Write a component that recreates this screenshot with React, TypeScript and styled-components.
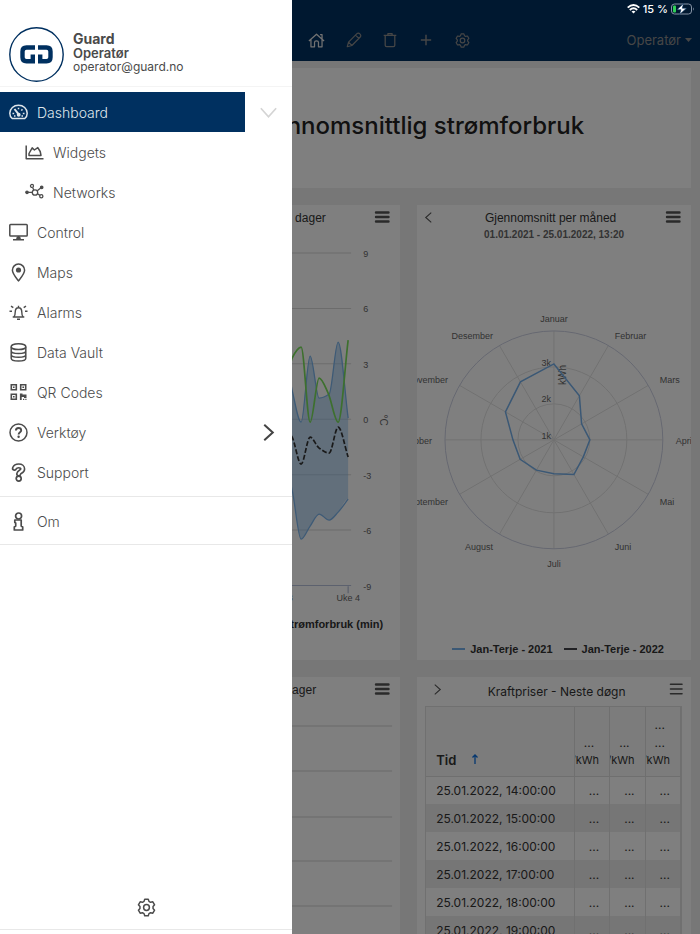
import React from "react";
import styled, { createGlobalStyle, css } from "styled-components";

const UI = `Inter, "Liberation Sans", sans-serif`;
const CHART = `"Liberation Sans", Arial, sans-serif`;
const NAVY = "#003060";

const GlobalStyle = createGlobalStyle`
  *, *::before, *::after { box-sizing: border-box; }
  body { margin: 0; font-family: ${UI}; color: #333; background: #efefef; }
  button { font: inherit; color: inherit; background: none; border: 0; padding: 0; cursor: pointer; }
  a { color: inherit; text-decoration: none; }
  h1, h2, h3, p, ul { margin: 0; padding: 0; }
  ul { list-style: none; }
  svg { display: block; flex: none; }
`;

const Shell = styled.div`
  position: relative;
  height: 100vh;
  overflow: hidden;
`;

/* ---------- top bar ---------- */

const TopBar = styled.header`
  display: flex;
  align-items: center;
  height: 61px;
  padding: 19px 8px 0 306px;
  background: ${NAVY};
  color: #8c8c8c;
`;

const Tools = styled.nav`
  display: flex;
  align-items: center;
  gap: 20px;
  flex: 1;
`;

const ToolButton = styled.button<{ $active?: boolean }>`
  display: grid;
  place-items: center;
  width: ${(p) => (p.$active ? "20px" : "16px")};
  height: 24px;
  color: ${(p) => (p.$active ? "#e4e4e4" : "#8c8c8c")};
`;

const UserMenu = styled.button`
  display: flex;
  align-items: center;
  gap: 4px;
  font-size: 13px;
`;

const StatusBar = styled.div`
  position: absolute;
  top: 1px;
  right: 5px;
  display: flex;
  align-items: center;
  gap: 3px;
  height: 16px;
  color: #fff;
  font-size: 11px;
  font-weight: 500;
`;

/* ---------- dashboard ---------- */

const Dashboard = styled.main`
  display: grid;
  grid-template-columns: minmax(0, 10fr) minmax(0, 7fr);
  gap: 17px;
  padding: 7px 9px;
`;

const Banner = styled.section`
  grid-column: 1 / -1;
  display: grid;
  place-items: center;
  height: 120px;
  padding-bottom: 6px;
  background: #fff;
  color: #222;
`;

const BannerTitle = styled.h1`
  font-size: 24px;
  font-weight: 500;
  white-space: nowrap;
`;

const Card = styled.section`
  display: flex;
  flex-direction: column;
  height: 455px;
  background: #fff;
  overflow: hidden;
`;

const CardHead = styled.div<{ $wide?: boolean }>`
  display: grid;
  grid-template-columns: 20px 1fr 20px;
  align-items: center;
  height: 24px;
  padding: ${(p) => (p.$wide ? "0 5px 0 10px" : "0 8px 0 1px")};
`;

const CardTitle = styled.h2<{ $ui?: boolean }>`
  padding-top: ${(p) => (p.$ui ? "4px" : "2px")};
  font-family: ${(p) => (p.$ui ? UI : CHART)};
  font-size: 12px;
  font-weight: 400;
  text-align: center;
  color: #333;
  white-space: nowrap;
`;

const Subtitle = styled.p`
  min-height: 16px;
  font-family: ${CHART};
  font-size: 10px;
  font-weight: 700;
  line-height: 12px;
  text-align: center;
  color: #666;
`;

const CardButton = styled.button`
  display: grid;
  place-items: center;
  width: 20px;
  height: 20px;
  color: #555;
`;

const Plot = styled.svg`
  width: 100%;
  height: auto;
  font-family: ${CHART};
  font-size: 9px;
  fill: #666;
`;

const Legend = styled.ul`
  display: flex;
  justify-content: center;
  gap: 11px;
  margin-top: auto;
  padding: 0 0 4px 8px;
  font-family: ${CHART};
  font-size: 11px;
  font-weight: 700;
  line-height: 14px;
  color: #333;
`;

const AreaLegend = styled(Legend)`
  justify-content: flex-end;
  padding: 0 17px 29px 0;
`;

const LegendItem = styled.li`
  display: flex;
  align-items: center;
  gap: 5px;
  white-space: nowrap;
`;

const Swatch = styled.span<{ $color: string }>`
  width: 13px;
  height: 2px;
  background: ${(p) => p.$color};
`;

/* ---------- price table ---------- */

const TableBox = styled.div`
  margin: 5px 9px 0 8px;
  flex: 1;
  overflow: hidden;
  border: 1px solid #e0e0e0;
`;

const PriceTable = styled.table`
  width: 100%;
  table-layout: fixed;
  border-collapse: collapse;
  font-size: 12px;
  color: #333;
`;

const HeadCell = styled.th`
  height: 69px;
  padding: 0 10px 8px 0;
  vertical-align: bottom;
  border-right: 1px solid #dedede;
  border-bottom: 1px solid #dedede;
  background: #f8f8f8;
  font-size: 11px;
  font-weight: 400;
`;

const TimeHead = styled(HeadCell)`
  width: 148px;
  padding: 0 10px 8px;
  text-align: left;
  font-size: 13px;
  font-weight: 600;
`;

const SortButton = styled.button`
  display: flex;
  align-items: center;
  gap: 15px;
`;

const Unit = styled.span`
  display: flex;
  flex-direction: column;
  align-items: flex-end;
  overflow: hidden;
  line-height: 16px;
`;

const Dots = styled.span`
  padding-right: 5px;
  font-size: 12px;
  line-height: 18px;
`;

const BodyRow = styled.tr`
  &:nth-child(even) {
    background: #ececec;
  }
`;

const Cell = styled.td<{ $num?: boolean }>`
  height: 28px;
  padding: 0 10px;
  border-right: 1px solid #e0e0e0;
  text-align: ${(p) => (p.$num ? "right" : "left")};
  white-space: nowrap;
`;

/* ---------- drawer ---------- */

const Scrim = styled.div`
  position: absolute;
  inset: 0;
  background: rgba(0, 0, 0, 0.5);
`;

const Drawer = styled.aside`
  position: absolute;
  inset: 0 auto 0 0;
  display: flex;
  flex-direction: column;
  width: 292px;
  background: #fff;
  color: #4c4c4c;
`;

const Profile = styled.div`
  display: flex;
  align-items: center;
  gap: 9px;
  height: 87px;
  padding: 22px 9px 0;
  border-bottom: 1px solid #f4f4f4;
  color: #4a4a4a;
`;

const ProfileText = styled.div`
  display: flex;
  flex-direction: column;
  padding-bottom: 4px;
`;

const Name = styled.strong`
  font-size: 14px;
  font-weight: 700;
  line-height: 15px;
`;

const Role = styled.strong`
  font-size: 13px;
  font-weight: 600;
  line-height: 14px;
`;

const Email = styled.span`
  font-size: 12px;
  line-height: 13px;
`;

const Menu = styled.ul<{ $second?: boolean }>`
  padding: ${(p) => (p.$second ? "4px 0 3px" : "5px 0 4px")};
  border-bottom: 1px solid #e8e8e8;
`;

const MenuRow = styled.li`
  display: flex;
  align-items: center;
  height: 40px;
`;

const MenuLink = styled.a<{ $active?: boolean; $sub?: boolean }>`
  display: flex;
  align-items: center;
  gap: 9px;
  width: 245px;
  height: 40px;
  padding-left: ${(p) => (p.$sub ? "25px" : "9px")};
  font-size: 14px;
  font-weight: 300;
  ${(p) =>
    p.$active &&
    css`
      background: ${NAVY};
      color: #dfe5eb;
    `}
`;

const Expand = styled.button<{ $faded?: boolean }>`
  display: grid;
  place-items: center;
  flex: 1;
  height: 40px;
  color: ${(p) => (p.$faded ? "#d4d4d4" : "#444")};
`;

const DrawerFoot = styled.div`
  display: grid;
  place-items: center;
  height: 44px;
  margin: auto 0 4px;
  border-bottom: 1px solid #e8e8e8;
`;

/* ---------- icons ---------- */

const IconSvg = styled.svg.attrs({ viewBox: "0 0 19 19", "aria-hidden": true })<{ $size?: number; $weight?: number }>`
  width: ${(p) => p.$size ?? 19}px;
  height: ${(p) => p.$size ?? 19}px;
  fill: none;
  stroke: currentColor;
  stroke-width: ${(p) => p.$weight ?? 1.5};
  stroke-linejoin: round;
`;

const GaugeIcon = () => (
  <IconSvg>
    <path d="M3.200 15.500C1.700 14.300 0.800 12.500 0.800 10.300C0.800 5.600 4.700 2.200 9.500 2.200S18.200 5.600 18.200 10.300C18.200 12.500 17.300 14.300 15.800 15.500Z" />
    <path d="M5.500 6L9.500 11.200" strokeWidth="2" />
    <circle cx="9.700" cy="11.700" r="1.200" fill="currentColor" />
    <path d="M3.500 10.500H5.200M13.800 10.500H15.500M9.500 4.700V6.200M13.400 6.300L12.400 7.600M5 13H6.500M12.500 13H14" />
  </IconSvg>
);

const AreaIcon = () => (
  <IconSvg>
    <path d="M1.200 2.500V15.700H18.500" />
    <path d="M4 12.500V10.500L7.200 4.800L9.400 7L12.800 4.600L15.200 8.500L16 12.500Z" />
  </IconSvg>
);

const NetworkIcon = () => (
  <IconSvg $weight={1.3}>
    <circle cx="2" cy="9.300" r="1.200" fill="currentColor" />
    <circle cx="10" cy="9.500" r="2.700" />
    <circle cx="7" cy="2.900" r="1.500" />
    <circle cx="16.700" cy="4.300" r="1.200" fill="currentColor" />
    <circle cx="16.300" cy="13.300" r="1.600" />
    <path d="M3 9.400H7.200M7.600 4.400L8.800 7M12.300 7.800L15.700 5M12.500 10.800L14.900 12.400" />
  </IconSvg>
);

const DesktopIcon = () => (
  <IconSvg>
    <rect x="0.800" y="1.500" width="17.400" height="11.500" rx="0.800" />
    <path d="M9.500 13V16.500M4 16.700H15" />
    <path d="M7.800 13.500H11.200L12 16.500H7Z" fill="currentColor" stroke="none" />
  </IconSvg>
);

const PinIcon = () => (
  <IconSvg>
    <path d="M9.500 17.900C7 14.700 3.400 10.500 3.400 7.200A6.100 6.100 0 0 1 15.600 7.200C15.600 10.500 12 14.700 9.500 17.900Z" />
    <circle cx="9.500" cy="7" r="2.600" fill="currentColor" stroke="none" />
  </IconSvg>
);

const AlarmIcon = () => (
  <IconSvg $weight={1.4}>
    <path d="M3.700 14H15.300M5 13.800C6.200 12.500 6.200 11.300 6.200 9.300C6.200 6.600 7.500 4.700 9.500 4.700S12.800 6.600 12.800 9.300C12.800 11.300 12.800 12.500 14 13.800M9.500 4.500V2.800M8 16.200H11" />
    <path d="M0.500 8.200H3M2 3.200L4.300 4.700M18.500 8.200H16M17 3.200L14.700 4.700" />
  </IconSvg>
);

const DatabaseIcon = () => (
  <IconSvg>
    <ellipse cx="9.500" cy="3.700" rx="7.300" ry="2.900" />
    <path d="M2.200 3.700V15.300C2.200 16.900 5.500 18.100 9.500 18.100S16.800 16.900 16.800 15.300V3.700M2.200 7.700C2.200 9.300 5.500 10.500 9.500 10.500S16.800 9.300 16.800 7.700M2.200 11.500C2.200 13.100 5.500 14.300 9.500 14.300S16.800 13.100 16.800 11.500" />
  </IconSvg>
);

const QrIcon = () => (
  <IconSvg $weight={1.6}>
    <path d="M2.300 1.800H7.300V6.800H2.300ZM11.700 1.800H16.700V6.800H11.700ZM2.300 11.200H7.300V16.200H2.300Z" strokeLinejoin="miter" />
    <path d="M4 3.500H5.600V5.100H4ZM13.400 3.500H15V5.100H13.400ZM4 12.900H5.600V14.500H4ZM10.900 10.400H13.500V11.600H17.500V15H15V14H12.700V17H10.900ZM14 15.800H15.300V17H14ZM16.300 15.800H17.500V17H16.300Z" fill="currentColor" stroke="none" />
  </IconSvg>
);

const HelpIcon = () => (
  <IconSvg>
    <circle cx="9.500" cy="9.500" r="8.500" />
    <path d="M6.900 7.600C6.900 5.900 8 5 9.500 5S12.200 6 12.200 7.400C12.200 9.300 9.600 9.200 9.600 11.500" strokeWidth="1.900" />
    <circle cx="9.600" cy="13.700" r="1.200" fill="currentColor" stroke="none" />
  </IconSvg>
);

const SUPPORT_MARK = "M5.500 5.200C6.200 3.500 7.600 2.900 9.700 2.900C12.300 2.900 13.700 4.200 13.700 6C13.700 8.700 10 8.400 9.700 10.800";

const SupportIcon = () => (
  <IconSvg>
    <path d={SUPPORT_MARK} strokeWidth="5.400" strokeLinecap="round" />
    <path d={SUPPORT_MARK} strokeWidth="2.200" stroke="#fff" strokeLinecap="round" />
    <circle cx="9.700" cy="15.600" r="2.500" fill="#fff" strokeWidth="1.700" />
  </IconSvg>
);

const InfoIcon = () => (
  <IconSvg $weight={1.7}>
    <path d="M5.800 8H12.200V14L13.700 15V18H5.300V15L6.700 14V11L5.800 10.500Z" />
    <circle cx="9.600" cy="4" r="3" fill="#fff" />
  </IconSvg>
);

const GEAR = Array.from({ length: 6 }, (_, i) =>
  [
    [-22, 6.6],
    [-12, 8.5],
    [12, 8.5],
    [22, 6.6],
  ].map(([offset, r]) => {
    const a = ((i * 60 + offset) * Math.PI) / 180;
    return `${(9.5 + r * Math.sin(a)).toFixed(2)} ${(9.5 - r * Math.cos(a)).toFixed(2)}`;
  }),
).flat();

const GearIcon = ({ size, weight }: { size?: number; weight?: number }) => (
  <IconSvg $size={size} $weight={weight}>
    <path d={`M${GEAR.join("L")}Z`} />
    <circle cx="9.500" cy="9.500" r="2.900" />
  </IconSvg>
);

const HomeIcon = () => (
  <IconSvg $size={17} $weight={1.4}>
    <path d="M1 10L9.500 2.500L18 10M3.300 8.200V16.500H7.300V11.500C7.300 10.500 8.200 9.900 9.500 9.900S11.700 10.500 11.700 11.500V16.500H15.700V8.200M13.500 3H15.700V7.500" />
  </IconSvg>
);

const PencilIcon = () => (
  <IconSvg $size={16} $weight={1.4}>
    <path d="M1.500 17.500L3 12L13 2C14 1 15.300 1.100 16.400 2.200S17.900 4.900 16.900 5.900L7 16ZM3 12L7 16M11.300 3.700L15.300 7.600" />
  </IconSvg>
);

const TrashIcon = () => (
  <IconSvg $size={16} $weight={1.5}>
    <path d="M2 4H17M3.800 4V15.800Q3.800 17.500 5.500 17.500H13.500Q15.200 17.500 15.200 15.800V4M7 4V1.800H12V4" />
  </IconSvg>
);

const PlusIcon = () => (
  <IconSvg $size={14} $weight={2}>
    <path d="M9.500 2.500V16.500M2.500 9.500H16.500" />
  </IconSvg>
);

const Logo = () => (
  <svg width="55" height="55" viewBox="0 0 55 55" fill="none" stroke={NAVY} aria-label="GD">
    <circle cx="27.500" cy="27.500" r="26.700" strokeWidth="1.400" />
    <g strokeWidth="4.400">
      <path d="M26 20.500H17.500Q13.500 20.500 13.500 24.500V30.200Q13.500 34.200 17.500 34.200H23.800V27.500" />
      <path d="M29 20.500H37.500Q41.500 20.500 41.500 24.500V30.200Q41.500 34.200 37.500 34.200H31.200V27.500" />
    </g>
  </svg>
);

const Chevron = ({ dir, size = 10, width = 1 }: { dir: "left" | "right" | "down"; size?: number; width?: number }) => {
  const d = { left: "M7.500 0.500L2.500 5L7.500 9.500", right: "M2.500 0.500L7.500 5L2.500 9.500", down: "M0.500 2.500L5 7.500L9.500 2.500" }[dir];
  return (
    <svg width={size} height={size} viewBox="0 0 10 10" fill="none" stroke="currentColor" strokeWidth={width}>
      <path d={d} />
    </svg>
  );
};

const Bars = ({ thick }: { thick?: boolean }) => (
  <svg width="16" height="12" viewBox="0 0 16 12" stroke="currentColor" strokeWidth={thick ? 2.4 : 1.6}>
    <path d={thick ? "M2 1.500H14.500M2 6H14.500M2 10.500H14.500" : "M2.500 1.200H14M2.500 6H14M2.500 10.800H14"} strokeLinecap="round" />
  </svg>
);

const Wifi = () => (
  <svg width="13" height="10" viewBox="0 0 13 10" fill="none" stroke="#fff" strokeWidth="1.900">
    <path d="M0.700 3.600Q6.500 -1.400 12.300 3.600M2.800 6Q6.500 2.700 10.200 6" />
    <path d="M4.500 7.400Q6.500 6 8.500 7.400L6.500 9.600Z" fill="#fff" stroke="none" />
  </svg>
);

const Battery = () => (
  <svg width="24" height="12" viewBox="0 0 24 12">
    <rect x="0.500" y="1" width="20" height="10" rx="3" fill="none" stroke="#8593a5" />
    <path d="M22 4.200Q23.800 6 22 7.800Z" fill="#8593a5" />
    <rect x="2" y="2.500" width="3" height="7" rx="1" fill="#30d158" />
    <path d="M12.500 0.500L6 6.700H10L8.500 11.500L15.500 5.200H11.300Z" fill="#fff" stroke={NAVY} strokeWidth="0.600" />
  </svg>
);

/* ---------- charts ---------- */

type Point = [number, number];

/* Smooth path whose tangents are flat at every local extreme. */
const spline = (pts: Point[]) => {
  const slope = pts.map((p, i) => {
    if (i === 0 || i === pts.length - 1) return 0;
    const a = (p[1] - pts[i - 1][1]) / (p[0] - pts[i - 1][0]);
    const b = (pts[i + 1][1] - p[1]) / (pts[i + 1][0] - p[0]);
    return a * b <= 0 ? 0 : (2 * a * b) / (a + b);
  });
  const last = pts.length - 1;
  slope[last] = (pts[last][1] - pts[last - 1][1]) / (pts[last][0] - pts[last - 1][0]);
  return pts
    .slice(1)
    .map((p, i) => {
      const q = pts[i];
      const h = (p[0] - q[0]) / 3;
      return `C${q[0] + h} ${q[1] + slope[i] * h} ${p[0] - h} ${p[1] - slope[i + 1] * h} ${p[0]} ${p[1]}`;
    })
    .join("");
};

const HIGH: Point[] = [[265, 130], [274, 100], [283, 145], [292, 177], [301, 111], [310, 153], [320, 149], [329, 97], [339, 173]];
const LOW: Point[] = [[265, 225], [274, 215], [283, 245], [292, 294], [301, 281], [310, 269], [320, 275], [329, 267], [339, 254]];
const GREEN: Point[] = [[265, 150], [274, 165], [283, 113], [292, 102], [301, 177], [310, 133], [319, 148], [329, 177], [339, 95]];
const MEAN: Point[] = [[265, 190], [274, 180], [283, 192], [292, 219], [301, 192], [310, 203], [320, 208], [329, 182], [339, 212]];

const move = (p: Point) => `M${p[0]} ${p[1]}`;
const LOW_BACK = [...LOW].reverse();

const AreaChart = () => (
  <Plot viewBox="0 0 391 370" role="img" aria-label="Strømforbruk og temperatur">
    {[9, 6, 3, 0, -3, -6, -9].map((v, i) => {
      const y = 8 + i * 55.4;
      return (
        <g key={v}>
          <path d={`M40 ${y}H342`} stroke={v === -9 ? "#b8c2dc" : "#d8d8d8"} />
          <text x="354" y={y + 4}>{v}</text>
        </g>
      );
    })}
    <path d={`${move(HIGH[0])}${spline(HIGH)}L339 254${spline(LOW_BACK)}Z`} fill="#7cb5ec" fillOpacity="0.45" />
    <g fill="none" strokeWidth="1.300">
      <path d={move(HIGH[0]) + spline(HIGH)} stroke="#7cb5ec" />
      <path d={move(LOW[0]) + spline(LOW)} stroke="#7cb5ec" />
      <path d={move(GREEN[0]) + spline(GREEN)} stroke="#7be05c" strokeWidth="1.700" />
      <path d={move(MEAN[0]) + spline(MEAN)} stroke="#333" strokeWidth="1.700" strokeDasharray="5 2" />
      <path d="M339 341V348" stroke="#b8c2dc" />
    </g>
    <text x="339" y="356" textAnchor="middle">Uke 4</text>
    <text x="272" y="356" textAnchor="middle">Uke 3</text>
    <text transform="translate(371 175) rotate(90)" textAnchor="middle" fontSize="10">°C</text>
  </Plot>
);

const EmptyChart = () => (
  <Plot viewBox="0 0 391 240" role="img" aria-label="Temperatur">
    {[25, 70, 116, 160, 205].map((y) => (
      <path key={y} d={`M40 ${y}H383`} stroke="#d4d4d4" />
    ))}
  </Plot>
);

const MONTHS: { name: string; x: number; y: number; anchor: "start" | "middle" | "end" }[] = [
  { name: "Januar", x: 137, y: 77, anchor: "middle" },
  { name: "Februar", x: 198, y: 94, anchor: "start" },
  { name: "Mars", x: 243, y: 138, anchor: "start" },
  { name: "April", x: 259, y: 199, anchor: "start" },
  { name: "Mai", x: 243, y: 260, anchor: "start" },
  { name: "Juni", x: 198, y: 305, anchor: "start" },
  { name: "Juli", x: 137, y: 322, anchor: "middle" },
  { name: "August", x: 76, y: 305, anchor: "end" },
  { name: "September", x: 31, y: 260, anchor: "end" },
  { name: "Oktober", x: 15, y: 199, anchor: "end" },
  { name: "November", x: 31, y: 138, anchor: "end" },
  { name: "Desember", x: 76, y: 94, anchor: "end" },
];

const USAGE = [76, 51, 32, 36, 34, 40, 34, 35, 39, 41, 56, 67];

const polar = (i: number, r: number): Point => {
  const a = (i * Math.PI) / 6;
  return [137 + r * Math.sin(a), 195 - r * Math.cos(a)];
};

const RadarChart = () => (
  <Plot viewBox="0 0 274 340" role="img" aria-label="Gjennomsnitt per måned">
    <g fill="none" stroke="#e2e2e2">
      {MONTHS.map((m, i) => {
        const [x, y] = polar(i, 109);
        return <path key={m.name} d={`M137 195L${x} ${y}`} />;
      })}
      <circle cx="137" cy="195" r="36" />
      <circle cx="137" cy="195" r="73" />
      <circle cx="137" cy="195" r="109" stroke="#ccd0e2" />
    </g>
    {MONTHS.map((m) => (
      <text key={m.name} x={m.x} y={m.y} textAnchor={m.anchor}>{m.name}</text>
    ))}
    <text x="134" y="121" textAnchor="end">3k</text>
    <text x="134" y="157" textAnchor="end">2k</text>
    <text x="134" y="194" textAnchor="end">1k</text>
    <text transform="translate(149 130) rotate(-90)" textAnchor="middle" fontSize="10">kWh</text>
    <polygon points={USAGE.map((r, i) => polar(i, r).join(",")).join(" ")} fill="none" stroke="#76b0ea" strokeWidth="1.500" />
  </Plot>
);

const TIMES = [14, 15, 16, 17, 18, 19, 20, 21].map((h) => `25.01.2022, ${h}:00:00`);

const MENU = [
  { label: "Dashboard", icon: <GaugeIcon />, active: true, expand: "down" as const },
  { label: "Widgets", icon: <AreaIcon />, sub: true },
  { label: "Networks", icon: <NetworkIcon />, sub: true },
  { label: "Control", icon: <DesktopIcon /> },
  { label: "Maps", icon: <PinIcon /> },
  { label: "Alarms", icon: <AlarmIcon /> },
  { label: "Data Vault", icon: <DatabaseIcon /> },
  { label: "QR Codes", icon: <QrIcon /> },
  { label: "Verktøy", icon: <HelpIcon />, expand: "right" as const },
  { label: "Support", icon: <SupportIcon /> },
];

export default function App() {
  return (
    <Shell>
      <GlobalStyle />
      <TopBar>
        <Tools aria-label="Dashboard">
          <ToolButton $active aria-label="Hjem"><HomeIcon /></ToolButton>
          <ToolButton aria-label="Rediger"><PencilIcon /></ToolButton>
          <ToolButton aria-label="Slett"><TrashIcon /></ToolButton>
          <ToolButton aria-label="Legg til"><PlusIcon /></ToolButton>
          <ToolButton aria-label="Innstillinger"><GearIcon size={15} weight={1.5} /></ToolButton>
        </Tools>
        <UserMenu>
          Operatør
          <svg width="7" height="4" viewBox="0 0 7 4" fill="currentColor"><path d="M0 0H7L3.500 4Z" /></svg>
        </UserMenu>
      </TopBar>

      <Dashboard>
        <Banner><BannerTitle>Jan-Terje - Gjennomsnittlig strømforbruk</BannerTitle></Banner>

        <Card>
          <CardHead>
            <span />
            <CardTitle>Gjennomsnittlig strømforbruk de siste 30 dager</CardTitle>
            <CardButton aria-label="Meny"><Bars thick /></CardButton>
          </CardHead>
          <Subtitle />
          <AreaChart />
          <AreaLegend><LegendItem>Strømforbruk (min)</LegendItem></AreaLegend>
        </Card>

        <Card>
          <CardHead>
            <CardButton aria-label="Forrige"><Chevron dir="left" size={11} /></CardButton>
            <CardTitle>Gjennomsnitt per måned</CardTitle>
            <CardButton aria-label="Meny"><Bars thick /></CardButton>
          </CardHead>
          <Subtitle>01.01.2021 - 25.01.2022, 13:20</Subtitle>
          <RadarChart />
          <Legend>
            <LegendItem><Swatch $color="#76b0ea" />Jan-Terje - 2021</LegendItem>
            <LegendItem><Swatch $color="#434348" />Jan-Terje - 2022</LegendItem>
          </Legend>
        </Card>

        <Card>
          <CardHead>
            <span />
            <CardTitle>Gjennomsnittstemperatur de siste 30 dager</CardTitle>
            <CardButton aria-label="Meny"><Bars thick /></CardButton>
          </CardHead>
          <EmptyChart />
        </Card>

        <Card>
          <CardHead $wide>
            <CardButton aria-label="Neste"><Chevron dir="right" size={11} /></CardButton>
            <CardTitle $ui>Kraftpriser - Neste døgn</CardTitle>
            <CardButton aria-label="Meny"><Bars /></CardButton>
          </CardHead>
          <TableBox>
            <PriceTable>
              <thead>
                <tr>
                  <TimeHead>
                    <SortButton>
                      Tid
                      <svg width="8" height="12" viewBox="0 0 8 12" fill="none" stroke="#0a6fe0" strokeWidth="1.300"><path d="M4 10V1M1.500 3.500L4 1L6.500 3.500" /></svg>
                    </SortButton>
                  </TimeHead>
                  {[1, 1, 2].map((n, i) => (
                    <HeadCell key={i}>
                      <Unit>
                        {n === 2 && <Dots>...</Dots>}
                        <Dots>...</Dots>
                        <span>/kWh</span>
                      </Unit>
                    </HeadCell>
                  ))}
                </tr>
              </thead>
              <tbody>
                {TIMES.map((t) => (
                  <BodyRow key={t}>
                    <Cell>{t}</Cell>
                    <Cell $num>...</Cell>
                    <Cell $num>...</Cell>
                    <Cell $num>...</Cell>
                  </BodyRow>
                ))}
              </tbody>
            </PriceTable>
          </TableBox>
        </Card>
      </Dashboard>

      <Scrim />
      <StatusBar><Wifi /><span>15 %</span><Battery /></StatusBar>

      <Drawer>
        <Profile>
          <Logo />
          <ProfileText>
            <Name>Guard</Name>
            <Role>Operatør</Role>
            <Email>operator@guard.no</Email>
          </ProfileText>
        </Profile>
        <Menu>
          {MENU.map((m) => (
            <MenuRow key={m.label}>
              <MenuLink href="#" $active={m.active} $sub={m.sub}>{m.icon}{m.label}</MenuLink>
              {m.expand === "down" && <Expand $faded aria-label="Skjul"><Chevron dir="down" size={17} /></Expand>}
              {m.expand === "right" && <Expand aria-label="Vis"><Chevron dir="right" size={17} width={1.2} /></Expand>}
            </MenuRow>
          ))}
        </Menu>
        <Menu $second>
          <MenuRow><MenuLink href="#"><InfoIcon />Om</MenuLink></MenuRow>
        </Menu>
        <DrawerFoot>
          <button aria-label="Innstillinger"><GearIcon size={19} /></button>
        </DrawerFoot>
      </Drawer>
    </Shell>
  );
}
